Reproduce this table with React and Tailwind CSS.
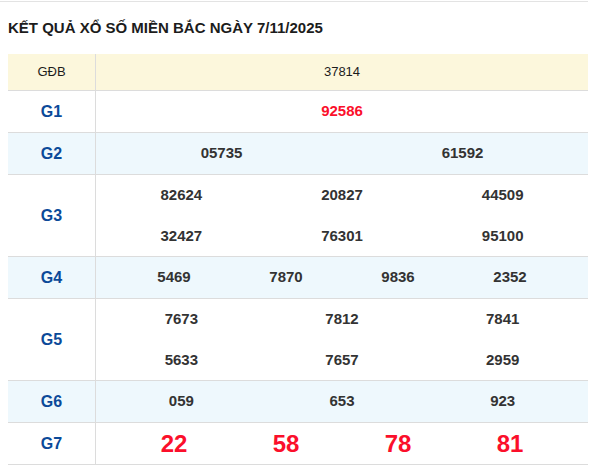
const rows = [
  { label: 'G1', bg: 'bg-white', cols: 1, nums: ['92586'], red: true },
  { label: 'G2', bg: 'bg-[#eef8fd]', cols: 2, nums: ['05735', '61592'] },
  { label: 'G3', bg: 'bg-white', cols: 3, nums: ['82624', '20827', '44509', '32427', '76301', '95100'] },
  { label: 'G4', bg: 'bg-[#eef8fd]', cols: 4, nums: ['5469', '7870', '9836', '2352'] },
  { label: 'G5', bg: 'bg-white', cols: 3, nums: ['7673', '7812', '7841', '5633', '7657', '2959'] },
  { label: 'G6', bg: 'bg-[#eef8fd]', cols: 3, nums: ['059', '653', '923'] },
  { label: 'G7', bg: 'bg-white', cols: 4, nums: ['22', '58', '78', '81'], big: true },
];

const gridCls = {
  1: 'grid-cols-1 px-[5px]',
  2: 'grid-cols-2 px-[5px]',
  3: 'grid-cols-3 px-[5px]',
  4: 'grid-cols-4 px-[22px]',
};

function PrizeRow({ row }) {
  const lines = Math.ceil(row.nums.length / row.cols);
  return (
    <div className={`flex border-b border-[#dcdcdc] ${row.bg}`}>
      <div className="w-[88px] shrink-0 border-r border-[#dcdcdc] flex items-center justify-center text-[16px] font-bold text-[#0b4a99]">
        {row.label}
      </div>
      <div className={`flex-1 grid ${gridCls[row.cols]}`}>
        {row.nums.map((n, i) => (
          <div
            key={i}
            className={`flex items-center justify-center font-bold ${lines > 1 ? 'h-[40.5px]' : 'h-[41px]'} ${
              row.big ? 'text-[24px] text-[#fb0f2b]' : row.red ? 'text-[15px] text-[#fb0f2b]' : 'text-[15px] text-[#333]'
            }`}
          >
            {n}
          </div>
        ))}
      </div>
    </div>
  );
}

export default function App() {
  return (
    <div className="w-[599px] h-[471px] bg-white font-['Liberation_Sans',Arial,sans-serif]">
      <div className="mt-px w-[588px] border-t border-[#e3e3e3]" />
      <h1 className="px-2 pt-[16px] pb-[16px] text-[15px] leading-[20px] font-bold text-[#1c1c1c]">
        KẾT QUẢ XỔ SỐ MIỀN BẮC NGÀY 7/11/2025
      </h1>
      <div className="ml-2 w-[580px]">
        <div className="flex h-[37px] border-b border-[#dcdcdc] bg-[#fcf7dc]">
          <div className="w-[88px] shrink-0 border-r border-[#dcdcdc] flex items-center justify-center text-[13px] text-[#1c1c1c]">
            GĐB
          </div>
          <div className="flex-1 flex items-center justify-center text-[13px] text-[#1c1c1c]">37814</div>
        </div>
        {rows.map((r) => (
          <PrizeRow key={r.label} row={r} />
        ))}
      </div>
    </div>
  );
}
